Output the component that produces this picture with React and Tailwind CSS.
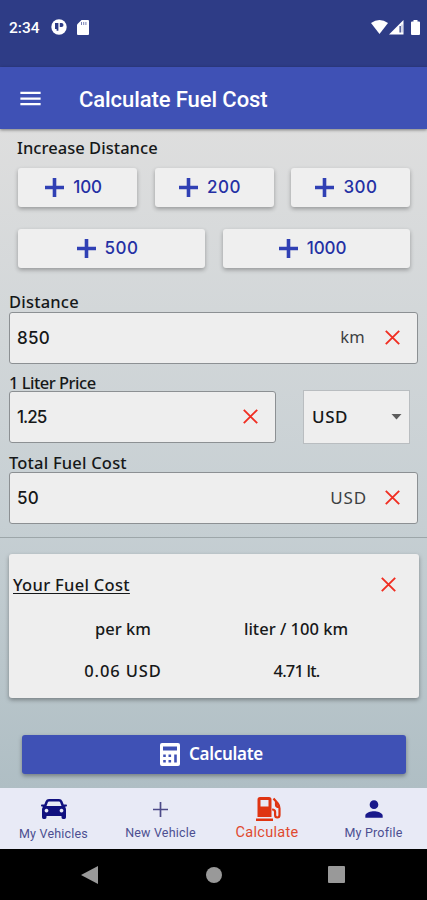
import React from "react";
import { MdPerson, MdMenu } from "react-icons/md";

function Plus() {
  return (
    <svg width="19" height="19" viewBox="0 0 19 19" className="shrink-0" fill="#3040b4">
      <path d="M7.700 0h3.600v7.700H19v3.600h-7.700V19H7.700v-7.700H0V7.700h7.700z" />
    </svg>
  );
}

function Clear({ className = "" }) {
  return (
    <svg width="15" height="15" viewBox="0 0 15 15" className={"shrink-0 " + className}>
      <path d="M.8.8l13.400 13.400M14.200.8L.8 14.200" stroke="#f02e22" strokeWidth="1.900" fill="none" />
    </svg>
  );
}

function Car() {
  return (
    <svg width="26" height="20" viewBox="0 0 26 20">
      <path
        fill="#10107f"
        fillRule="evenodd"
        d="M8 0h10q2.500 0 3.400 2.300L22.700 5.500h2.500q.8 0 .8.900t-.8 1.100l-1.200.3q1 1 1 2.700v7.700q0 1.800-1.500 1.800H22q-1.500 0-1.500-1.800V17h-15v1.200Q5.500 20 4 20H2.500Q1 20 1 18.200v-7.700q0-1.700 1-2.700l-1.200-.3Q0 7.300 0 6.400t.8-.9h2.500L4.600 2.300Q5.500 0 8 0zM8 2.500q-.8 0-1.100.8L5.500 7h15l-1.400-3.700q-.3-.8-1.100-.8zM5.500 9.700a1.900 1.900 0 1 0 .01 0zM20.500 9.700a1.900 1.900 0 1 0 .01 0z"
      />
    </svg>
  );
}

function AddButton({ label, labelClass, className }) {
  return (
    <button className={"flex h-[39px] items-center justify-center gap-[9px] rounded-[3px] bg-[#efefef] pr-[8px] text-[17px] text-[#2430a4] shadow-[0_2px_4px_rgba(0,0,0,0.3)] " + className}>
      <Plus />
      <span className={"pt-px font-[Inter] font-medium " + labelClass}>{label}</span>
    </button>
  );
}

function Field({ value, valueClass = "", unit, className = "", clearClass = "" }) {
  return (
    <div className={"flex h-[52px] items-center rounded-[3px] border border-[#8c9093] bg-[#eee] pb-px pl-[7px] " + className}>
      <span className={"grow pt-[2px] font-[Inter] text-[17px] font-medium " + valueClass}>{value}</span>
      {unit}
      <Clear className={clearClass} />
    </div>
  );
}

function StatusBar() {
  return (
    <header className="flex h-[67px] items-start bg-[#2e3c86] pt-[18px] text-white">
      <span className="ml-[9px] w-[42px] font-[Roboto] text-[15.500px] leading-[21px] font-medium">2:34</span>
      <svg width="16" height="16" viewBox="0 0 16 16" className="mt-[1px]">
        <circle cx="8" cy="8" r="7.700" fill="#fff" />
        <path d="M4 4h3.400v7.800H5.600V10H4zM8.800 4h1.700a2 2 0 0 1 0 4H8.800z" fill="#2e3c86" />
      </svg>
      <svg width="12" height="15" viewBox="0 0 12 15" className="mt-[2px] ml-[10px]">
        <path d="M4.500 0H11q1 0 1 1v13q0 1-1 1H1q-1 0-1-1V4.500z" fill="#fff" />
        <path d="M4 2h1v3H4zm2.200 0h1v3h-1zm2.200 0h1v3h-1z" fill="#7780b3" />
      </svg>
      <svg width="17" height="14" viewBox="0 0 17 14" className="mt-[2px] ml-auto">
        <path d="M0 3Q8.500-3 17 3L8.500 14z" fill="#fff" />
      </svg>
      <svg width="15" height="15" viewBox="0 0 15 15" className="mt-[2px] ml-px">
        <path d="M0 14.500L14.500 0v14.500z" fill="#fff" />
        <path d="M10.500 6h1.300v6.500h-1.300z" fill="#2e3c86" />
        <path d="M12.500 4.500h1v8h-1z" fill="#a8aed0" />
      </svg>
      <svg width="9" height="15" viewBox="0 0 9 15" className="mt-[2px] mr-[7px] ml-[7px]">
        <path d="M2.500 0h4v1.500H8q1 0 1 1V14q0 1-1 1H1q-1 0-1-1V2.500q0-1 1-1h1.500z" fill="#fff" />
      </svg>
    </header>
  );
}

function NavItem({ icon, label, className }) {
  return (
    <div className={"flex flex-col items-center " + className}>
      <div className="flex h-[28px] items-center">{icon}</div>
      {label}
    </div>
  );
}

export default function App() {
  return (
    <div className="flex h-[900px] w-[427px] flex-col overflow-hidden font-['Noto_Sans',sans-serif] text-[#161819]">
      <StatusBar />
      <div className="relative flex h-[62px] shrink-0 items-center bg-[#3f51b5] pt-[2px] text-white shadow-[0_1px_3px_rgba(0,0,0,0.45)]">
        <MdMenu size={27} className="mb-px ml-[17px]" />
        <h1 className="ml-[35px] font-[Roboto] text-[22px] font-medium tracking-[-0.080px]">Calculate Fuel Cost</h1>
      </div>

      <main className="flex h-[659px] shrink-0 flex-col bg-linear-to-b from-[#dedede] via-[#c6cfd3] via-60% to-[#afbec4]">
        <h2 className="mt-[9px] ml-[17px] h-[30px] text-[16.500px] leading-[20px] font-medium tracking-[0.050px]">Increase Distance</h2>
        <div className="mr-[17px] ml-[18px] flex justify-between">
          <AddButton label="100" className="w-[119px]" labelClass="tracking-[-0.200px]" />
          <AddButton label="200" className="w-[119px]" labelClass="tracking-[0.500px]" />
          <AddButton label="300" className="w-[119px]" labelClass="tracking-[0.500px]" />
        </div>
        <div className="mt-[22px] mr-[17px] ml-[18px] flex justify-between">
          <AddButton label="500" className="w-[187px]" labelClass="tracking-[0.500px]" />
          <AddButton label="1000" className="w-[187px]" labelClass="tracking-[-0.100px]" />
        </div>

        <section className="mr-[9px] ml-[9px] flex flex-col">
          <h3 className="mt-[25px] h-[19px] text-[16.500px] leading-[18px] font-medium tracking-[0.200px]">Distance</h3>
          <Field value="850" valueClass="tracking-[0.300px]" unit={<span className="mr-[20px] text-[16.500px] tracking-[0.300px] text-[#3c3f42]">km</span>} clearClass="mr-[17px]" />
          <h3 className="mt-[9px] h-[18px] text-[16.500px] leading-[19px] font-medium tracking-[-0.500px]">1 Liter Price</h3>
          <div className="flex h-[52px] items-start">
            <Field value="1.25" valueClass="tracking-[-1px]" className="w-[267px]" clearClass="mr-[17px]" />
            <div className="-mt-px ml-[27px] flex h-[54px] w-[107px] items-center justify-between border border-[#b9bdc0] bg-[#eee] pr-[7px] pl-[8px] text-[17px] font-medium">
              <span className="tracking-[0.600px]">USD</span>
              <svg width="11" height="6" viewBox="0 0 11 6"><path d="M.5 0h10L5.500 5.500z" fill="#5c5c5c" /></svg>
            </div>
          </div>
          <h3 className="mt-[10px] h-[19px] text-[16.500px] leading-[19px] font-medium tracking-[0.200px]">Total Fuel Cost</h3>
          <Field value="50" valueClass="tracking-[0.300px]" unit={<span className="mr-[18px] text-[17px] tracking-[0.900px] text-[#3c3f42]">USD</span>} clearClass="mr-[17px]" />
        </section>

        <hr className="mt-[13px] border-[#9da6a9]" />
        <section className="mr-[8px] ml-[9px] mt-[16px] h-[144px] shrink-0 rounded-[3px] bg-[#eee] px-[4px] pt-[20px] shadow-[0_2px_4px_rgba(0,0,0,0.35)]">
          <div className="flex items-center justify-between pr-[19px]">
            <h2 className="text-[16.500px] leading-[22px] font-medium tracking-[0.300px] underline decoration-1 underline-offset-[2px]">Your Fuel Cost</h2>
            <Clear className="mb-px" />
          </div>
          <div className="mr-[34px] ml-[24px] mt-[22px] grid grid-cols-2 gap-y-[20px] text-center text-[16.500px] leading-[22px] font-medium">
            <span>per km</span>
            <span className="pl-[2px]">liter / 100 km</span>
            <span className="tracking-[0.900px]">0.06 USD</span>
            <span className="pl-[3px] tracking-[-0.800px]">4.71 lt.</span>
          </div>
        </section>

        <button className="mt-[37px] mr-[21px] ml-[22px] flex h-[39px] shrink-0 items-center justify-center rounded-[3px] bg-[#3f51b5] pr-[5px] pb-px text-[17px] font-semibold tracking-[-0.300px] text-white shadow-[0_2px_4px_rgba(0,0,0,0.35)]">
          <svg width="20" height="23" viewBox="0 0 20 23" className="mr-[9px]">
            <path fill="#fff" fillRule="evenodd" d="M2 0h16q2 0 2 2v19q0 2-2 2H2q-2 0-2-2V2q0-2 2-2zM3 3.500v4h14v-4zM3.200 11.500v2.400h2.600v-2.400zM8.500 11.500v2.400h2.600v-2.400zM3.200 17v2.400h2.600V17zM8.500 17v2.400h2.600V17zM14.200 11.500v7.900h2.600v-7.900z" />
          </svg>
          Calculate
        </button>
      </main>

      <nav className="flex h-[61px] shrink-0 bg-[#e8eaf6] font-[Roboto] text-[#4c4f91]">
        <NavItem className="w-[107px] pt-[7px]" icon={<Car />} label={<span className="text-[12.500px] leading-[21px] tracking-[0.200px]">My Vehicles</span>} />
        <NavItem
          className="w-[107px] pt-[7px]"
          icon={<svg width="15" height="15" viewBox="0 0 15 15"><path d="M7.500 0v15M0 7.500h15" stroke="#4c4a88" strokeWidth="1.700" /></svg>}
          label={<span className="text-[12.500px] leading-[19px] tracking-[0.200px]">New Vehicle</span>}
        />
        <NavItem
          className="w-[106px] pt-[7px] text-[#e0492f]"
          icon={
            <svg width="25" height="24" viewBox="0 0 25 24" className="mb-[1px] ml-[2px]">
              <path fill="#df3412" fillRule="evenodd" d="M4 0h9q2.500 0 2.500 2.500V20h-14V2.500Q1.500 0 4 0zM4.500 3v6.500h8V3zM0 21.500h17V24H0z" />
              <path d="M17.500 1.500l4.300 5q1.700 2 1.700 5v6.500q0 2.500-2.200 2.500t-2.200-2.500v-3q0-2.500-3-2.500M20 5v3q0 2 3 2" fill="none" stroke="#df3412" strokeWidth="2.200" />
            </svg>
          }
          label={<span className="text-[14.500px] leading-[19px] tracking-[0.300px]">Calculate</span>}
        />
        <NavItem className="w-[107px] pt-[7px]" icon={<MdPerson size={26} color="#19198b" />} label={<span className="text-[12.500px] leading-[19px] tracking-[0.200px]">My Profile</span>} />
      </nav>

      <footer className="flex h-[51px] shrink-0 items-center bg-black text-[#999]">
        <svg width="17" height="18" viewBox="0 0 17 18" className="ml-[81px]"><path d="M17 0v18L0 9z" fill="currentColor" /></svg>
        <span className="ml-[108px] size-[16px] rounded-full bg-[#999]" />
        <span className="ml-[106px] size-[17px] rounded-[1px] bg-[#999]" />
      </footer>
    </div>
  );
}
